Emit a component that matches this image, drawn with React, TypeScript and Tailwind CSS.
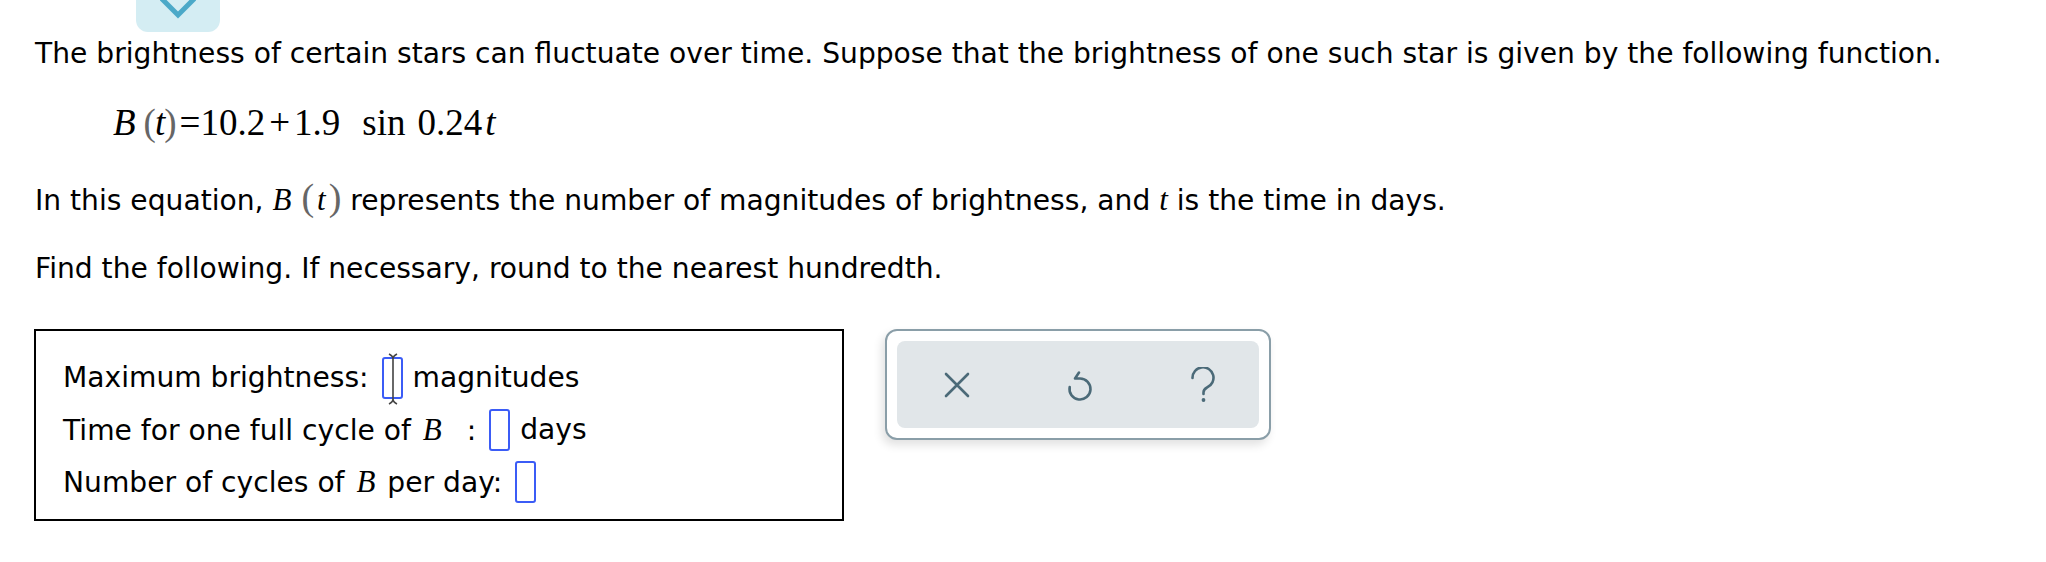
import React from "react";

const serif = "font-['Liberation_Serif','Times_New_Roman',serif]";

function MathB({ spaced = false }: { spaced?: boolean }) {
  return (
    <span className={`${serif} italic text-[31px] ${spaced ? "mx-[3px]" : ""}`}>
      B
    </span>
  );
}

function Paren({ children }: { children: React.ReactNode }) {
  return (
    <span className={`${serif} text-[38px] leading-[28px] text-[#666]`}>
      {children}
    </span>
  );
}

function AnswerBlank({ cursor = false }: { cursor?: boolean }) {
  return (
    <span className="relative ml-[13px] mr-[10px] inline-block h-[42px] w-[21px] rounded-[3px] border-2 border-[#3b5cf6] align-middle">
      {cursor && (
        <svg
          className="absolute left-[1px] top-[-7px]"
          width="16"
          height="54"
          viewBox="0 0 16 54"
        >
          <path
            d="M4 2 Q8 4 8 7 Q8 4 12 2 M8 7 V47 M4 52 Q8 50 8 47 Q8 50 12 52"
            stroke="#444"
            strokeWidth="1.6"
            fill="none"
          />
        </svg>
      )}
    </span>
  );
}

export default function App() {
  return (
    <div className="min-h-screen bg-white pl-[35px] font-['DejaVu_Sans','Verdana',sans-serif] text-[28.15px] text-black">
      {/* collapse toggle */}
      <div className="ml-[101px] flex h-[32px] w-[84px] items-start justify-center overflow-hidden rounded-b-[12px] bg-[#d4edf3]">
        <svg width="36" height="20" viewBox="0 0 36 20">
          <path
            d="M0 -3 L18 15 L36 -3"
            stroke="#4ba9c8"
            strokeWidth="5"
            fill="none"
          />
        </svg>
      </div>

      <p className="mt-[7px] leading-[30px]">
        The brightness of certain stars can fluctuate over time. Suppose that
        the brightness of one such star is given by the following function.
      </p>

      <div
        className={`${serif} ml-[78px] mt-[32px] flex h-[44px] items-center text-[37px] leading-[44px]`}
      >
        <span className="italic">B</span>
        <span className="ml-[8px] text-[#666]">(</span>
        <span className="mx-[-1px] italic">t</span>
        <span className="text-[#666]">)</span>
        <span className="ml-[3px]">=</span>
        <span>10.2</span>
        <span className="mx-[4px]">+</span>
        <span>1.9</span>
        <span className="ml-[22px]">sin</span>
        <span className="ml-[12px]">0.24</span>
        <span className="ml-[3px] italic">t</span>
      </div>

      <p className="mt-[38px] h-[30px] leading-[30px]">
        In this equation, <MathB />
        <span className="ml-[10px]">
          <Paren>(</Paren>
        </span>
        <span className={`${serif} mx-[3px] italic text-[31px]`}>t</span>
        <Paren>)</Paren> represents the number of magnitudes of brightness, and{" "}
        <span className={`${serif} italic text-[31px]`}>t</span> is the time in
        days.
      </p>

      <p className="mt-[41px] leading-[30px]">
        Find the following. If necessary, round to the nearest hundredth.
      </p>

      <div className="ml-[-1px] mt-[45px] flex items-start gap-[41px]">
        <div className="flex w-[810px] flex-col border-2 border-black pb-[11px] pl-[27px] pt-[21px]">
          <div className="flex h-[52px] items-center">
            <span>Maximum brightness:</span>
            <AnswerBlank cursor />
            <span>magnitudes</span>
          </div>
          <div className="flex h-[52px] items-center">
            <span>
              Time for one full cycle of <MathB spaced />
              <span className="ml-[22px]">:</span>
            </span>
            <AnswerBlank />
            <span>days</span>
          </div>
          <div className="flex h-[52px] items-center">
            <span>
              Number of cycles of <MathB spaced /> per day:
            </span>
            <AnswerBlank />
          </div>
        </div>

        <div className="h-[111px] w-[386px] rounded-[12px] border-2 border-[#8a9ea8] bg-white p-[10px] shadow-[-3px_5px_10px_rgba(0,0,0,0.12)]">
          <div className="flex h-full items-center gap-[83px] rounded-[8px] bg-[#e1e6e9] pl-[40px]">
            <button className="flex h-[40px] w-[40px] items-center justify-center">
              <svg width="26" height="26" viewBox="0 0 26 26">
                <path
                  d="M2 2 L24 24 M24 2 L2 24"
                  stroke="#4b6a78"
                  strokeWidth="2.6"
                  strokeLinecap="round"
                />
              </svg>
            </button>
            <button className="flex h-[40px] w-[40px] items-center justify-center">
              <svg width="28" height="34" viewBox="0 0 28 34">
                <path
                  d="M14 10.5 A10.5 10.5 0 1 1 3.7 19 M14 10.5 H9 L13 4.5"
                  stroke="#4b6a78"
                  strokeWidth="2.6"
                  strokeLinecap="round"
                  strokeLinejoin="round"
                  fill="none"
                />
              </svg>
            </button>
            <button className="flex h-[40px] w-[40px] items-center justify-center">
              <svg width="26" height="36" viewBox="0 0 26 36">
                <path
                  d="M2.5 11 A10.5 10.5 0 1 1 17 20.5 C14.5 21.8 13.5 23 13.5 25.5 V27"
                  stroke="#4b6a78"
                  strokeWidth="2.6"
                  strokeLinecap="round"
                  fill="none"
                />
                <circle cx="13.5" cy="33" r="1.9" fill="#4b6a78" />
              </svg>
            </button>
          </div>
        </div>
      </div>
    </div>
  );
}
